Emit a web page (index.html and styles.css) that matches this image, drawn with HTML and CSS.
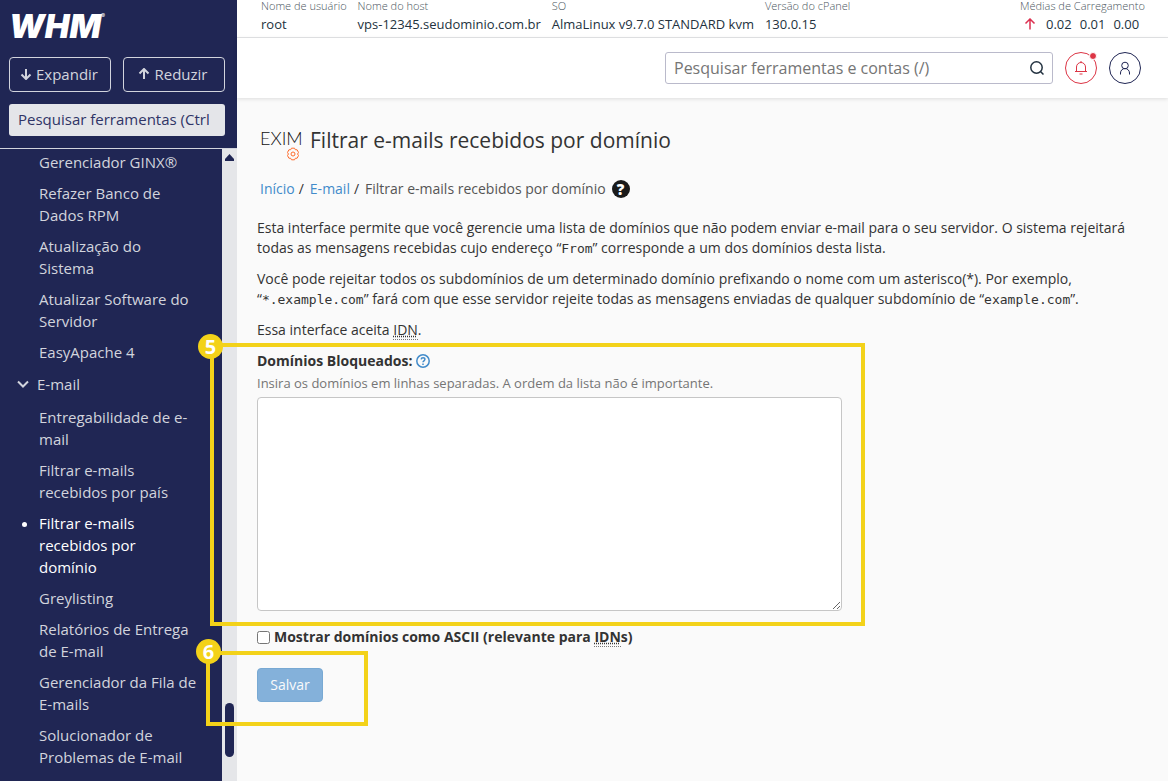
FILE: index.html
```html
<!DOCTYPE html>
<html lang="pt-BR">
<head>
    <meta charset="UTF-8">
    <meta name="viewport" content="width=device-width, initial-scale=1.0">
    <title>WHM - Filtrar e-mails recebidos por domínio</title>
    <link rel="stylesheet" href="styles.css">
</head>
<body>
    <div class="layout">
        <aside class="sidebar">
            <div class="sidebar-header">
                <a class="logo" href="#">WHM<sup>®</sup></a>
                <div class="sidebar-buttons">
                    <button type="button" class="nav-button">
                        <svg width="12" height="12" viewBox="0 0 12 12"><path d="M6 1v10M1.500 6.500 6 11l4.500-4.500"/></svg>
                        Expandir
                    </button>
                    <button type="button" class="nav-button">
                        <svg width="12" height="12" viewBox="0 0 12 12"><path d="M6 11V1M1.500 5.500 6 1l4.500 4.500"/></svg>
                        Reduzir
                    </button>
                </div>
                <input type="text" class="nav-search" placeholder="Pesquisar ferramentas (Ctrl + /)" aria-label="Pesquisar ferramentas">
            </div>
            <div class="sidebar-body">
                <nav class="nav">
                    <ul class="nav-list">
                        <li><a href="#">Gerenciador GINX®</a></li>
                        <li><a href="#">Refazer Banco de Dados RPM</a></li>
                        <li><a href="#">Atualização do Sistema</a></li>
                        <li><a href="#">Atualizar Software do Servidor</a></li>
                        <li><a href="#">EasyApache 4</a></li>
                    </ul>
                    <button type="button" class="nav-group">
                        <svg width="12" height="8" viewBox="0 0 12 8"><path d="M1 1.500l5 5 5-5"/></svg>
                        E-mail
                    </button>
                    <ul class="nav-list">
                        <li><a href="#">Entregabilidade de e-mail</a></li>
                        <li><a href="#">Filtrar e-mails recebidos por país</a></li>
                        <li class="active"><a href="#">Filtrar e-mails recebidos por domínio</a></li>
                        <li><a href="#">Greylisting</a></li>
                        <li><a href="#">Relatórios de Entrega de E-mail</a></li>
                        <li><a href="#">Gerenciador da Fila de E-mails</a></li>
                        <li><a href="#">Solucionador de Problemas de E-mail</a></li>
                    </ul>
                </nav>
                <div class="scrollbar">
                    <svg width="9" height="7" viewBox="0 0 9 7"><path d="M4.500 0 9 5v2H0V5z"/></svg>
                    <div class="scrollbar-thumb"></div>
                </div>
            </div>
        </aside>

        <div class="page">
            <dl class="server-info">
                <div><dt>Nome de usuário</dt><dd>root</dd></div>
                <div><dt>Nome do host</dt><dd>vps-12345.seudominio.com.br</dd></div>
                <div><dt>SO</dt><dd>AlmaLinux v9.7.0 STANDARD kvm</dd></div>
                <div><dt>Versão do cPanel</dt><dd>130.0.15</dd></div>
                <div class="load">
                    <dt>Médias de Carregamento</dt>
                    <dd>
                        <svg width="12" height="12" viewBox="0 0 12 12"><path d="M6 11.500V1M1.500 5.500 6 1l4.500 4.500"/></svg>
                        <span>0.02</span><span>0.01</span><span>0.00</span>
                    </dd>
                </div>
            </dl>

            <header class="topbar">
                <div class="search">
                    <input type="text" placeholder="Pesquisar ferramentas e contas (/)" aria-label="Pesquisar ferramentas e contas">
                    <button type="button" aria-label="Pesquisar">
                        <svg width="16" height="16" viewBox="0 0 16 16"><circle cx="7.500" cy="7.500" r="5.700"/><path d="M11.500 11.500l3 3"/></svg>
                    </button>
                </div>
                <button type="button" class="round bell" aria-label="Notificações">
                    <svg width="14" height="14" viewBox="0 0 14 14"><path d="M1 10.500h12M2.500 10.500V6a4.500 4.500 0 0 1 9 0v4.500M7 1.500V0M5.500 13h3"/></svg>
                    <span class="dot"></span>
                </button>
                <button type="button" class="round" aria-label="Conta">
                    <svg width="14" height="14" viewBox="0 0 14 14"><circle cx="7" cy="4.500" r="3.300"/><path d="M2.500 13.500V12a4.500 4.500 0 0 1 9 0v1.500"/></svg>
                </button>
            </header>

            <main class="content">
                <div class="title">
                    <div class="title-icon">
                        EXIM
                        <svg width="12" height="14" viewBox="0 0 12 14"><path d="M4.500 1.200h3L8.300 2.700l1.800.1 1.400 2.600L10.600 7l.9 1.600-1.400 2.600-1.800.1-.8 1.500h-3l-.8-1.500-1.800-.1L.5 8.600 1.400 7 .5 5.400l1.400-2.600 1.800-.1z"/><circle cx="6" cy="7" r="2"/></svg>
                    </div>
                    <h1>Filtrar e-mails recebidos por domínio</h1>
                </div>

                <nav class="breadcrumb">
                    <a href="#">Início</a><span class="sep">/</span>
                    <a href="#">E-mail</a><span class="sep">/</span>
                    <span>Filtrar e-mails recebidos por domínio</span>
                    <a href="#" class="help" aria-label="Ajuda">?</a>
                </nav>

                <p>Esta interface permite que você gerencie uma lista de domínios que não podem enviar e-mail para o seu servidor. O sistema rejeitará todas as mensagens recebidas cujo endereço “<code>From</code>” corresponde a um dos domínios desta lista.</p>
                <p>Você pode rejeitar todos os subdomínios de um determinado domínio prefixando o nome com um asterisco(*). Por exemplo, “<code>*.example.com</code>” fará com que esse servidor rejeite todas as mensagens enviadas de qualquer subdomínio de “<code>example.com</code>”.</p>
                <p>Essa interface aceita <abbr title="Internationalized Domain Name">IDN</abbr>.</p>

                <form>
                    <div class="field">
                        <label for="domains">Domínios Bloqueados:</label>
                        <svg class="hint" width="14" height="14" viewBox="0 0 14 14"><circle cx="7" cy="7" r="6.200"/><path d="M5.200 5.400c.1-2.400 3.700-2.300 3.700-.1C8.900 6.800 7 6.800 7 8.300M7 9.600v1.400"/></svg>
                        <div class="field-note">Insira os domínios em linhas separadas. A ordem da lista não é importante.</div>
                        <textarea id="domains"></textarea>
                        <div class="callout callout-field"><span>5</span></div>
                    </div>
                    <div class="check">
                        <input type="checkbox" id="ascii">
                        <label for="ascii">Mostrar domínios como ASCII (relevante para <abbr title="Internationalized Domain Name">IDN</abbr>s)</label>
                    </div>
                    <div class="actions">
                        <button type="submit" class="save" disabled>Salvar</button>
                        <div class="callout callout-save"><span>6</span></div>
                    </div>
                </form>
            </main>
        </div>
    </div>
</body>
</html>
```
FILE: styles.css
```css
* {
    box-sizing: border-box;
}
body {
    margin: 0;
    font-family: "Open Sans", sans-serif;
    font-size: 14px;
    line-height: 20px;
    color: #333;
    background: #fafafa;
}
button, input, textarea {
    font-family: inherit;
}
svg {
    fill: none;
    stroke: currentColor;
    flex: none;
}
a {
    color: #428bca;
    text-decoration: none;
}
.layout {
    display: flex;
    height: 100vh;
    overflow: hidden;
}

/* sidebar */
.sidebar {
    width: 237px;
    flex: none;
    display: flex;
    flex-direction: column;
    background: #202654;
    color: #d2d4dd;
    font-size: 15px;
    line-height: 22px;
}
.sidebar-header {
    padding: 8px 12px 12px 9px;
    border-bottom: 1px solid #d2d4dd;
}
.logo {
    display: block;
    font-family: Inter, sans-serif;
    font-size: 33px;
    font-weight: 900;
    font-style: italic;
    line-height: 36px;
    color: #fff;
}
.logo sup {
    font-size: 6px;
    font-weight: 400;
    font-style: normal;
    line-height: 0;
    vertical-align: 20px;
}
.sidebar-buttons {
    display: flex;
    gap: 12px;
    margin: 13px 0 12px;
}
.nav-button {
    flex: 1;
    display: flex;
    align-items: center;
    justify-content: center;
    gap: 4px;
    height: 35px;
    padding: 0 2px 1px 0;
    border: 1px solid #d2d4dd;
    border-radius: 4px;
    background: none;
    color: #d2d4dd;
    font-size: 15px;
    line-height: 20px;
    cursor: pointer;
}
.nav-button svg {
    stroke-width: 2;
}
.nav-search {
    display: block;
    width: 100%;
    height: 32px;
    padding: 0 16px 2px 9px;
    border: none;
    border-radius: 3px;
    background: #e4e5e9;
    font-size: 15px;
}
.nav-search::placeholder {
    color: #2f3466;
    opacity: 1;
}
.sidebar-body {
    flex: 1;
    min-height: 0;
    display: flex;
}
.nav {
    flex: 1;
    overflow: hidden;
    padding: 2px 25px 0 17px;
}
.nav-list {
    list-style: none;
    margin: 0;
    padding: 0 0 0 22px;
    display: flex;
    flex-direction: column;
    gap: 9px;
}
.nav-list a {
    color: #d2d4dd;
}
.nav-list .active {
    list-style: disc;
}
.nav-list .active,
.nav-list .active a {
    color: #fff;
}
.nav-group {
    display: flex;
    align-items: center;
    gap: 8px;
    margin: 10px 0 11px;
    padding: 0;
    border: none;
    background: none;
    color: #d2d4dd;
    font-size: 15px;
    line-height: 22px;
}
.nav-group svg {
    stroke-width: 2;
}
.scrollbar {
    width: 15px;
    display: flex;
    flex-direction: column;
    align-items: center;
    justify-content: space-between;
    padding: 5px 0 24px;
    background: #e5e6e9;
}
.scrollbar svg {
    fill: #202654;
    stroke: none;
}
.scrollbar-thumb {
    width: 9px;
    height: 54px;
    border-radius: 5px;
    background: #202654;
}

/* top bars */
.page {
    flex: 1;
    min-width: 0;
}
.server-info {
    display: flex;
    gap: 11px;
    margin: 0;
    height: 38px;
    padding: 0 23px 0 24px;
    background: #fff;
    border-bottom: 1px solid #e4e5e7;
    white-space: nowrap;
}
.server-info dt {
    font-size: 11px;
    font-weight: 300;
    line-height: 12px;
    color: #4b5660;
}
.server-info dd {
    margin: 0;
    font-size: 13px;
    line-height: 24px;
    color: #233240;
}
.load {
    margin-left: auto;
}
.load dd {
    display: flex;
    align-items: center;
    gap: 8px;
    padding-left: 4px;
}
.load svg {
    margin-right: 2px;
    color: #dc3050;
    stroke-width: 1.5;
}
.topbar {
    display: flex;
    align-items: center;
    justify-content: flex-end;
    gap: 12px;
    height: 60px;
    padding: 0 27px 0 24px;
    background: #fff;
    box-shadow: 0 1px 4px rgba(0,0,0,0.12);
}
.search {
    display: flex;
    align-items: center;
    flex: 0 1 388px;
    height: 32px;
    border: 1px solid #babacb;
    border-radius: 3px;
}
.search input {
    flex: 1;
    min-width: 0;
    padding: 0 8px;
    border: none;
    outline: none;
    background: none;
    font-size: 16px;
}
.search input::placeholder {
    color: #757575;
}
.search button {
    display: flex;
    padding: 0 7px;
    border: none;
    background: none;
    color: #233240;
}
.search svg {
    stroke-width: 1.5;
}
.round {
    position: relative;
    display: flex;
    align-items: center;
    justify-content: center;
    width: 32px;
    height: 32px;
    padding: 0;
    border: 1px solid #202654;
    border-radius: 50%;
    background: #fff;
    color: #202654;
}
.bell {
    border-color: #dc3545;
    color: #dc3545;
}
.dot {
    position: absolute;
    top: -1px;
    right: -1px;
    width: 8px;
    height: 8px;
    border: 1px solid #fff;
    border-radius: 50%;
    background: #dc3545;
}

/* content */
.content {
    padding: 28px 40px 20px 20px;
}
.title {
    display: flex;
    align-items: flex-start;
    gap: 8px;
    padding-left: 3px;
}
.title-icon {
    display: flex;
    flex-direction: column;
    width: 42px;
    font-family: Lato, sans-serif;
    font-size: 18px;
    font-weight: 300;
    line-height: 24px;
    color: #111;
}
.title-icon svg {
    align-self: flex-end;
    margin: -3px 3px 0 0;
    color: #ff6c2c;
}
h1 {
    margin: 0;
    font-size: 21px;
    font-weight: 400;
    line-height: 28px;
}
.breadcrumb {
    display: flex;
    align-items: center;
    padding-left: 3px;
    margin: 18px 0 19px;
    color: #555;
}
.sep {
    margin: 0 6px 0 4px;
    color: #333;
}
.help {
    display: flex;
    align-items: center;
    justify-content: center;
    width: 18px;
    height: 18px;
    margin-left: 6px;
    border-radius: 50%;
    background: #1a1a1a;
    color: #fff;
    font-size: 15px;
    font-weight: 800;
}
p {
    margin: 0 0 11px;
}
code {
    font-family: "DejaVu Sans Mono", monospace;
    font-size: 13px;
    line-height: 16px;
}
abbr {
    text-decoration: underline dotted;
    border-bottom: 1px dotted #777;
}
.field {
    position: relative;
    max-width: 585px;
    margin-top: 10px;
}
.field label,
.check label {
    font-weight: 700;
}
.hint {
    vertical-align: -2px;
    color: #428bca;
    stroke-width: 1.5;
}
.field-note {
    margin: 2px 0 4px;
    font-size: 13px;
    color: #757575;
}
textarea {
    display: block;
    width: 100%;
    height: 214px;
    border: 1px solid #c6c6c6;
    border-radius: 4px;
    background: #fff;
}
.check {
    display: flex;
    align-items: center;
    gap: 4px;
    margin: 16px 0 21px;
}
.check input {
    width: 13px;
    height: 13px;
    margin: 0;
}
.actions {
    position: relative;
    width: fit-content;
}
.save {
    display: block;
    min-width: 66px;
    height: 34px;
    padding: 0 12px;
    border: 1px solid #78a9d3;
    border-radius: 4px;
    background: #84b1da;
    color: #fafafa;
    font-size: 14px;
    line-height: 20px;
}

/* numbered highlights over the form */
.callout {
    position: absolute;
    border: 4px solid #f3d219;
    pointer-events: none;
}
.callout span {
    position: absolute;
    width: 25px;
    height: 25px;
    border-radius: 50%;
    background: #f3d219;
    color: #fff;
    font-size: 20px;
    font-weight: 700;
    line-height: 25px;
    text-align: center;
}
.callout-field {
    inset: -8px -23px -15px -47px;
}
.callout-field span {
    top: -13px;
    left: -16px;
}
.callout-save {
    inset: -17px -45px -24px -51px;
}
.callout-save span {
    top: -16px;
    left: -14px;
}
```
